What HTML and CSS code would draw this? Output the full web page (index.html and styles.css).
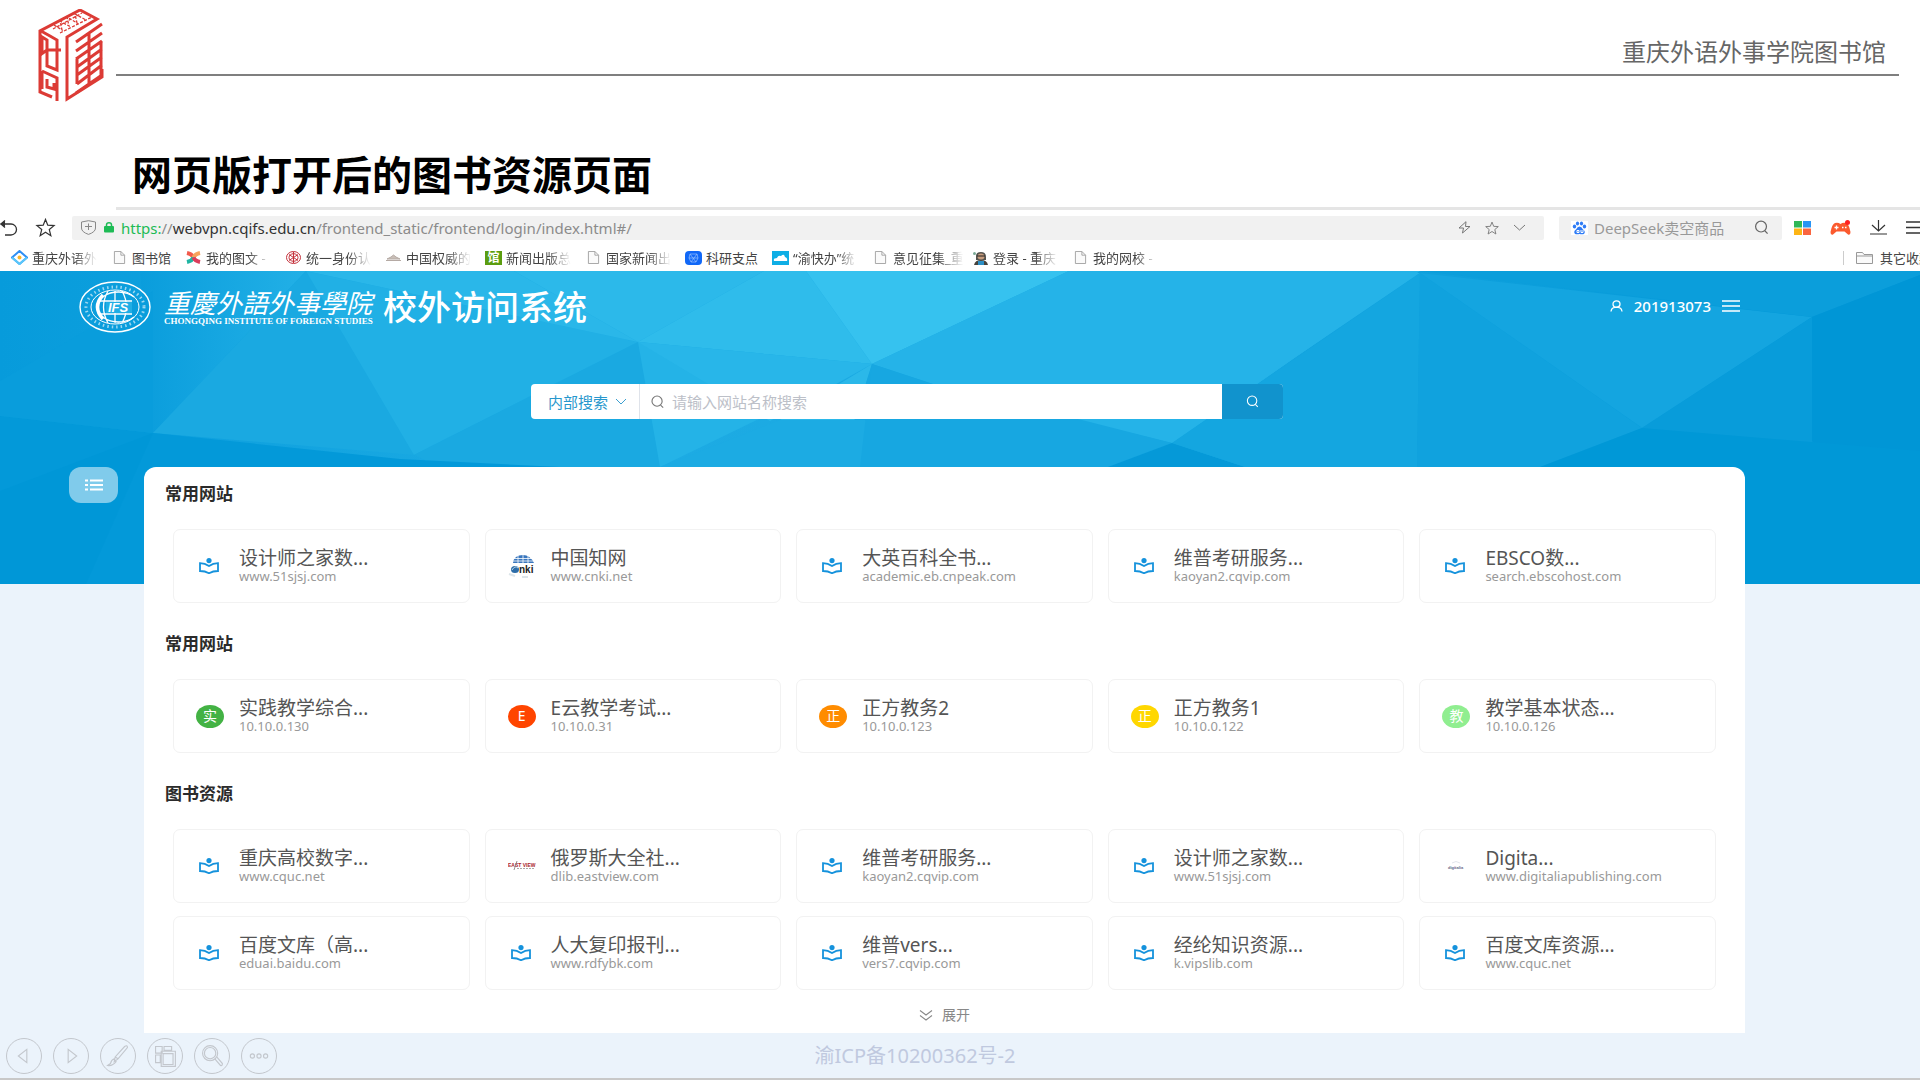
FILE: index.html
```html
<!DOCTYPE html>
<html lang="zh-CN">
<head>
<meta charset="utf-8">
<title>网页版打开后的图书资源页面</title>
<link rel="stylesheet" href="styles.css">
</head>
<body>
<svg class="defs" aria-hidden="true">
  <symbol id="book" viewBox="0 0 20 16"><circle cx="10" cy="2.6" r="2.6" fill="#1592dc"/><path d="M1 5.2Q6 5.2 10 8Q14 5.2 19 5.2V13Q14 13 10 15.2Q6 13 1 13Z" fill="none" stroke="#1592dc" stroke-width="1.8"/></symbol>
  <symbol id="page" viewBox="0 0 12 14"><path d="M.5.5H7.5L11.5 4.5V13.5H.5ZM7.5.5V4.5H11.5" fill="#fafafa" stroke="#a0a0a0"/></symbol>
  <symbol id="search" viewBox="0 0 16 16"><circle cx="7.5" cy="7" r="5.8" fill="none" stroke="currentColor" stroke-width="1.3"/><path d="M11.5 11.5L14.5 14.5" stroke="currentColor" stroke-width="1.3"/></symbol>
  <symbol id="star" viewBox="0 0 20 20"><path d="M10 1.5L12.4 7.6L19 8L14 12.2L15.6 18.6L10 15L4.4 18.6L6 12.2L1 8L7.6 7.6Z" fill="none" stroke="currentColor" stroke-width="1.3"/></symbol>
</svg>

<header class="slide-head">
  <svg class="seal" viewBox="0 0 66 94" aria-hidden="true">
    <g fill="none" stroke="#dc3b35" stroke-width="3">
      <path d="M14 88L2 83V22L42 1L59 10L29 28V90L64 68V60"/>
      <path d="M3 22L12 27L19 31V61L9 57V31L4 28V44M2 46L9 41H23M4 62L19 69V92M4 62V80M9 70V78L16 80V74"/>
      <path d="M16 16L24 21L22 12L31 17L29 8L39 14L37 5L48 11M15 20L44 4M22 24L54 8" stroke-width="1.3" stroke-dasharray="3 1.500"/>
      <path d="M38 33L64 15M38 42L64 24M38 50L64 32M39 58L64 40M39 66L64 48M39 75L64 56M38 84L64 66M39 50V75M51 24V76M63 32V66"/>
    </g>
  </svg>
  <div class="slide-owner">重庆外语外事学院图书馆</div>
</header>
<h1 class="slide-title">网页版打开后的图书资源页面</h1>

<div class="browser">
  <div class="tabline"></div>
  <div class="toolbar">
    <button class="icon-btn back" aria-label="后退"><svg width="18" height="18" viewBox="0 0 18 18"><path d="M5 1.500L1 5L5 8.500M1 5H11A5.500 5.500 0 0 1 11 16H5" fill="none" stroke="#333" stroke-width="1.300"/><path d="M5 2V8L0 5Z" fill="#333"/></svg></button>
    <button class="icon-btn fav" aria-label="收藏"><svg width="21" height="19"><use href="#star"/></svg></button>
    <div class="address">
      <svg width="17" height="15" viewBox="0 0 17 15"><path d="M1.500 2L8.500.700L15.500 2V8Q15.500 12 8.500 14.400Q1.500 12 1.500 8ZM5 6.500H12M8.500 3.500V10" fill="none" stroke="#888"/></svg>
      <svg width="12" height="11" viewBox="0 0 12 11"><rect x="1" y="4" width="10" height="6.500" rx="1" fill="#1dbb55"/><path d="M3.500 5V3A2.500 2.200 0 0 1 8.500 3V5" fill="none" stroke="#1dbb55" stroke-width="1.500"/></svg>
      <span class="url"><span class="scheme">https:</span>//<b>webvpn.cqifs.edu.cn</b>/frontend_static/frontend/login/index.html#/</span>
      <svg width="13" height="13" viewBox="0 0 13 13"><path d="M8 .700L1 7H5.500L4.500 12L12 5.500H7.500Z" fill="none" stroke="#777"/></svg>
      <svg class="small-star" width="16" height="14"><use href="#star"/></svg>
      <svg width="13" height="7" viewBox="0 0 13 7"><path d="M1 1L6.500 6L12 1" fill="none" stroke="#777"/></svg>
    </div>
    <label class="quick">
      <svg width="17" height="14" viewBox="0 0 17 14"><rect width="17" height="14" fill="#fff"/><g fill="#2f7cf6"><ellipse cx="3.500" cy="5.500" rx="1.700" ry="2"/><ellipse cx="6.500" cy="2.500" rx="1.600" ry="2"/><ellipse cx="10.500" cy="2.500" rx="1.600" ry="2"/><ellipse cx="13.500" cy="5.500" rx="1.700" ry="2"/><path d="M8.500 5.500Q10.500 5.500 12 8.500Q15 10.500 13 13Q11 13.500 8.500 13Q6 13.500 4 13Q2 10.500 5 8.500Q6.500 5.500 8.500 5.500Z"/></g><path d="M6 9.500V11.500H8V9.500ZM10 9V11.500H12V9" fill="none" stroke="#fff"/></svg>
      <input type="text" placeholder="DeepSeek卖空商品" aria-label="搜索">
      <svg width="17" height="15"><use href="#search"/></svg>
    </label>
    <button class="icon-btn" aria-label="应用"><svg width="17" height="14" viewBox="0 0 17 14"><path d="M0 0H8V6.500H0Z" fill="#2fb757"/><path d="M9 0H17V6.500H9Z" fill="#2894f4"/><path d="M0 7.500H8V14H0Z" fill="#fdb515"/><path d="M9 7.500H17V14H9Z" fill="#fa6540"/></svg></button>
    <button class="icon-btn" aria-label="游戏"><svg width="21" height="16" viewBox="0 0 21 16"><path d="M5 3Q8 2 10.500 4Q13 2 16 3Q19 4 20.500 12Q20.500 15.500 18 14.500L14.500 11.500H6.500L3 14.500Q.500 15.500.500 12Q2 4 5 3Z" fill="#fb5a2e"/><path d="M4.500 7.500H8.500M6.500 5.500V9.500M12 7.500H13.500M15 7.500H16.500" stroke="#fff" stroke-width="1.300"/><circle cx="17.500" cy="2.500" r="2.500" fill="#f22"/></svg></button>
    <button class="icon-btn" aria-label="下载"><svg width="17" height="15" viewBox="0 0 17 15"><path d="M8.500 0V11M2 5L8.500 11L15 5M0 14H17" fill="none" stroke="#333" stroke-width="1.200"/></svg></button>
    <button class="icon-btn" aria-label="菜单"><svg width="18" height="13" viewBox="0 0 18 13"><path d="M0 1H18M0 6.500H18M0 12H18" stroke="#333" stroke-width="1.300"/></svg></button>
  </div>
  <nav class="bookmarks">
    <a href="#"><svg width="17" height="15" viewBox="0 0 17 15"><path d="M8.500 1L16 7.500L8.500 14L1 7.500Z" fill="none" stroke="#2e8ff5" stroke-width="2"/><path d="M1 7.500L8.500 14L16 7.500" fill="none" stroke="#5ac8fa" stroke-width="2"/><circle cx="8.500" cy="7.500" r="2" fill="#fbb92c"/></svg><span class="fade">重庆外语外</span></a>
    <a href="#"><svg width="17" height="13"><use href="#page"/></svg><span>图书馆</span></a>
    <a href="#"><svg width="17" height="13" viewBox="0 0 17 13"><path d="M2 2Q7 3 8.500 6.500" stroke="#f25a4c" stroke-width="4"/><path d="M15 2Q10 3 8.500 6.500" stroke="#f7a35c" stroke-width="4"/><path d="M2 11Q7 10 8.500 6.500" stroke="#1fb5a3" stroke-width="4"/><path d="M15 11Q10 10 8.500 6.500" stroke="#dc3c5c" stroke-width="4"/></svg><span class="fade">我的图文 -</span></a>
    <a href="#"><svg width="17" height="13" viewBox="0 0 17 13"><g fill="none" stroke="#c4313b"><ellipse cx="8.500" cy="6.500" rx="7" ry="6"/><ellipse cx="8.500" cy="6.500" rx="4.500" ry="3.800"/><path d="M4 3.500L13 9.500M13 3.500L4 9.500M8.500 1V12"/></g></svg><span class="fade">统一身份认</span></a>
    <a href="#"><svg width="17" height="13" viewBox="0 0 17 13"><path d="M1 9.500H16M2 8L6 6L8.500 4L11 6L15 8Z" fill="#c9bfb8" stroke="#b5aaa4"/></svg><span class="fade">中国权威的</span></a>
    <a href="#"><i class="guan">馆</i><span class="fade">新闻出版总</span></a>
    <a href="#"><svg width="17" height="13"><use href="#page"/></svg><span class="fade">国家新闻出</span></a>
    <a href="#"><svg width="17" height="14" viewBox="0 0 17 14"><rect width="17" height="14" rx="4" fill="#1168f7"/><path d="M5 3H12L13 7L11 11H6L4 7ZM5 3L11 11M12 3L6 11M4 7H13" fill="none" stroke="#9cc4ff" stroke-width=".700"/></svg><span>科研支点</span></a>
    <a href="#"><svg width="17" height="14" viewBox="0 0 17 14"><rect width="17" height="14" fill="#0faee5"/><path d="M2 10Q1 7 5 7Q6 4 9 5Q12 2 13 6Q16 7 15 10Z" fill="#fff"/></svg><span class="fade">“渝快办”统</span></a>
    <a href="#"><svg width="17" height="13"><use href="#page"/></svg><span class="fade wide">意见征集_重</span></a>
    <a href="#"><svg width="17" height="14" viewBox="0 0 17 14"><path d="M4 5Q4 1 9 1Q14 1 14 6V9H4Z" fill="#54534e"/><ellipse cx="9" cy="5.500" rx="3.500" ry="3" fill="#c69c7d"/><path d="M2 14Q3 9 9 9Q15 9 16 14Z" fill="#47423c"/><path d="M6 10H12V14H6Z" fill="#2d8fc5"/><path d="M5 5H13" stroke="#222"/><circle cx="2.500" cy="2.500" r="1.500" fill="#7aa996"/></svg><span class="fade">登录 - 重庆</span></a>
    <a href="#"><svg width="17" height="13"><use href="#page"/></svg><span class="fade">我的网校 -</span></a>
    <a href="#" class="others"><svg width="17" height="12" viewBox="0 0 17 12"><path d="M.500.500H6.500L8 2.500H16.500V11.500H.500ZM.500 4H16.500" fill="#fafafa" stroke="#999"/></svg><span>其它收藏</span></a>
  </nav>
</div>

<main class="site">
  <svg class="hero" viewBox="0 0 1920 313" preserveAspectRatio="none" aria-hidden="true">
    <defs><linearGradient id="sky"><stop offset="0" stop-color="#079bdb"/><stop offset=".300" stop-color="#1eace4"/><stop offset=".600" stop-color="#18a6e0"/><stop offset="1" stop-color="#0096d6"/></linearGradient>
    <linearGradient id="edge"><stop offset="0" stop-color="#0a9ddc"/><stop offset="1" stop-color="#22b0e6"/></linearGradient></defs>
    <rect width="1920" height="313" fill="url(#sky)"/>
    <path d="M140 0H306L153 162Z" fill="url(#edge)"/>
    <path d="M306 0L153 162L414 184L370 90Z" fill="#1aa9e1"/>
    <path d="M306 0L638 71L414 184Z" fill="#21b0e5"/>
    <path d="M306 0H514L638 71Z" fill="#2ab7e9"/>
    <path d="M514 0H764L638 71Z" fill="#2cb9ea"/>
    <path d="M764 0H806L872 93L638 71Z" fill="#2fbceb"/>
    <path d="M806 0H1069L872 93Z" fill="#36c2ef"/>
    <path d="M1069 0H1420L1172 172L872 93Z" fill="#24b3e8"/>
    <path d="M638 71L872 93L660 196H414Z" fill="#24b3e7"/>
    <path d="M638 71L414 184L440 196H660Z" fill="#1aa9e1"/>
    <path d="M638 71L872 93L770 150Z" fill="#28b6e9"/>
    <path d="M872 93L780 149L840 196L872 93Z" fill="#2bb8e9"/>
    <path d="M872 93L1172 172L1108 196H840Z" fill="#17a7e1"/>
    <path d="M780 149L660 196H940L865 149Z" fill="#1cabe3"/>
    <path d="M872 93L945 117L1172 172L1290 90L1420 2L1069 0Z" fill="#25b3e8"/>
    <path d="M872 93L945 117L1082 149L1172 172L1108 196H860Z" fill="#17a7e1"/>
    <path d="M1172 172L1108 196H1245Z" fill="#0599d8"/>
    <path d="M1420 2L1417 196H1245L1172 172Z" fill="#14a6e0"/>
    <path d="M1420 2L1812 46L1642 157Z" fill="#14a5e0"/>
    <path d="M1420 2L1642 157L1540 196H1417Z" fill="#10a2de"/>
    <path d="M1420 0H1920V4L1812 46Z" fill="#0b9edb"/>
    <path d="M1812 46L1642 157L1660 200L1920 313V170Z" fill="#089cda"/>
    <path d="M1812 46L1920 4V313L1812 170Z" fill="#0096d6"/>
    <path d="M1642 157L1540 196L1745 313H1920V180Z" fill="#0098d7"/>
    <path d="M0 145L153 162L400 188L560 196L144 313H0Z" fill="#0399d9"/>
    <path d="M0 313V220L153 162L86 313Z" fill="#0097d7"/>
    <path d="M0 110L153 20V162L0 145Z" fill="#099ddc"/>
  </svg>

  <header class="site-head">
    <svg class="crest" viewBox="0 0 72 52" aria-hidden="true">
      <g fill="none" stroke="#fff">
        <ellipse cx="36" cy="26" rx="35" ry="25" stroke-width="1.400"/>
        <ellipse cx="36" cy="26" rx="29" ry="20" stroke-width="3" stroke-dasharray="1.500 3" opacity=".600"/>
        <ellipse cx="36" cy="26" rx="24" ry="17" stroke-width="1"/>
        <path d="M55 16A21 15 0 1 0 55 36M36 10V42M19 20H53M19 33H53M29 10Q20 26 29 42M43 10Q52 26 43 42" stroke-width="1.300"/>
        <path d="M24 14Q13 26 24 38" stroke-width="3.500"/>
      </g>
      <rect x="27" y="21" width="26" height="11" fill="#20aee5"/>
      <text x="29" y="31" class="crest-text">IFS</text>
    </svg>
    <div class="school"><span class="school-cn">重慶外語外事學院</span><span class="school-en">CHONGQING INSTITUTE OF FOREIGN STUDIES</span></div>
    <h2 class="system">校外访问系统</h2>
    <div class="user"><svg width="13" height="12" viewBox="0 0 13 12"><ellipse cx="6.500" cy="4" rx="3.500" ry="3.200" fill="none" stroke="#fff" stroke-width="1.300"/><path d="M1 11.500Q1.500 7.500 5 7.300M12 11.500Q11.500 7.500 8 7.300M5 7.300H8" fill="none" stroke="#fff" stroke-width="1.300"/></svg><span>201913073</span>
    <button class="icon-btn" aria-label="导航"><svg width="18" height="12" viewBox="0 0 18 12"><path d="M0 1H18M0 6H18M0 11H18" stroke="#fff" stroke-width="1.600"/></svg></button></div>
  </header>

  <form class="search">
    <div class="scope"><select aria-label="搜索范围"><option>内部搜索</option></select><svg width="12" height="7" viewBox="0 0 12 7"><path d="M1 1L6 6L11 1" fill="none" stroke="#3a9fd0"/></svg></div>
    <label class="term"><svg width="15" height="14"><use href="#search"/></svg><input type="text" placeholder="请输入网站名称搜索" aria-label="网站名称"></label>
    <button type="button" class="go" aria-label="搜索"><svg width="15" height="13"><use href="#search"/></svg></button>
  </form>

  <div class="body">
    <aside class="side"><button class="list-btn" aria-label="分类"><svg width="18" height="12" viewBox="0 0 18 12"><path d="M0 1.500H3M5 1.500H18M0 6H3M5 6H18M0 10.500H3M5 10.500H18" stroke="#fff" stroke-width="1.800"/></svg></button></aside>
    <div class="panel">
      <section>
        <h3>常用网站</h3>
        <div class="cards">
          <a class="card" href="#"><svg class="ico"><use href="#book"/></svg><span class="txt"><strong>设计师之家数...</strong><small>www.51sjsj.com</small></span></a>
          <a class="card" href="#"><svg class="pic" viewBox="0 0 28 24"><path d="M5 9Q6 1 15 1Q22 1 26 9Z" fill="#3976bd"/><path d="M6 4.500H24M4 7H26M10 1V9M15 1V9M20 1V9" stroke="#fff" stroke-width=".800"/><ellipse cx="7" cy="15.500" rx="4" ry="3.500" fill="#2d6da8"/><path d="M4 16Q7 11 10 14" stroke="#b9d5e9" fill="none"/><text x="11" y="19" class="cnki">nki</text><path d="M1 20L7 22M14 23H20" stroke="#dde5ea" stroke-width="2"/></svg><span class="txt"><strong>中国知网</strong><small>www.cnki.net</small></span></a>
          <a class="card" href="#"><svg class="ico"><use href="#book"/></svg><span class="txt"><strong>大英百科全书...</strong><small>academic.eb.cnpeak.com</small></span></a>
          <a class="card" href="#"><svg class="ico"><use href="#book"/></svg><span class="txt"><strong>维普考研服务...</strong><small>kaoyan2.cqvip.com</small></span></a>
          <a class="card" href="#"><svg class="ico"><use href="#book"/></svg><span class="txt"><strong>EBSCO数...</strong><small>search.ebscohost.com</small></span></a>
        </div>
      </section>
      <section>
        <h3>常用网站</h3>
        <div class="cards">
          <a class="card" href="#"><i class="dot green">实</i><span class="txt"><strong>实践教学综合...</strong><small>10.10.0.130</small></span></a>
          <a class="card" href="#"><i class="dot red">E</i><span class="txt"><strong>E云教学考试...</strong><small>10.10.0.31</small></span></a>
          <a class="card" href="#"><i class="dot orange">正</i><span class="txt"><strong>正方教务2</strong><small>10.10.0.123</small></span></a>
          <a class="card" href="#"><i class="dot yellow">正</i><span class="txt"><strong>正方教务1</strong><small>10.10.0.122</small></span></a>
          <a class="card" href="#"><i class="dot lime">教</i><span class="txt"><strong>教学基本状态...</strong><small>10.10.0.126</small></span></a>
        </div>
      </section>
      <section>
        <h3>图书资源</h3>
        <div class="cards">
          <a class="card" href="#"><svg class="ico"><use href="#book"/></svg><span class="txt"><strong>重庆高校数字...</strong><small>www.cquc.net</small></span></a>
          <a class="card" href="#"><svg class="pic" viewBox="0 0 28 24"><text x="0" y="13" class="east">EAST VIEW</text><path d="M9 7L6 16" stroke="#777" stroke-width=".800"/><path d="M9 14.500H27" stroke="#aaa" stroke-dasharray="2 1"/></svg><span class="txt"><strong>俄罗斯大全社...</strong><small>dlib.eastview.com</small></span></a>
          <a class="card" href="#"><svg class="ico"><use href="#book"/></svg><span class="txt"><strong>维普考研服务...</strong><small>kaoyan2.cqvip.com</small></span></a>
          <a class="card" href="#"><svg class="ico"><use href="#book"/></svg><span class="txt"><strong>设计师之家数...</strong><small>www.51sjsj.com</small></span></a>
          <a class="card" href="#"><svg class="pic" viewBox="0 0 28 24"><text x="6" y="15" class="digi">digitalia</text><path d="M10 9Q14 6 18 9" fill="none" stroke="#e3e6ec"/></svg><span class="txt"><strong>Digita...</strong><small>www.digitaliapublishing.com</small></span></a>
          <a class="card" href="#"><svg class="ico"><use href="#book"/></svg><span class="txt"><strong>百度文库（高...</strong><small>eduai.baidu.com</small></span></a>
          <a class="card" href="#"><svg class="ico"><use href="#book"/></svg><span class="txt"><strong>人大复印报刊...</strong><small>www.rdfybk.com</small></span></a>
          <a class="card" href="#"><svg class="ico"><use href="#book"/></svg><span class="txt"><strong>维普vers...</strong><small>vers7.cqvip.com</small></span></a>
          <a class="card" href="#"><svg class="ico"><use href="#book"/></svg><span class="txt"><strong>经纶知识资源...</strong><small>k.vipslib.com</small></span></a>
          <a class="card" href="#"><svg class="ico"><use href="#book"/></svg><span class="txt"><strong>百度文库资源...</strong><small>www.cquc.net</small></span></a>
        </div>
      </section>
      <button class="expand"><svg width="14" height="11" viewBox="0 0 14 11"><path d="M1 .500L7 5L13 .500M1 5.500L7 10L13 5.500" fill="none" stroke="#888" stroke-width="1.100"/></svg>展开</button>
    </div>
  </div>

  <footer class="foot">
    <div class="controls">
      <button aria-label="上一页"><svg viewBox="0 0 36 36"><path d="M21 11V25L12 18Z"/></svg></button>
      <button aria-label="下一页"><svg viewBox="0 0 36 36"><path d="M15 11V25L24 18Z"/></svg></button>
      <button aria-label="画笔"><svg viewBox="0 0 36 36"><path d="M25 8Q28 6 28 9L18 21L14 24L15 19ZM15 19L18 21M14 21Q11 22 10 26L7 28Q12 29 16 24Z"/></svg></button>
      <button aria-label="幻灯片"><svg viewBox="0 0 36 36"><path d="M8 8H15V15H8ZM17 8H25V12H17ZM8 17H13V25H8ZM14 13H29V29H14ZM16 15.500H26.500V27H16Z"/></svg></button>
      <button aria-label="放大"><svg viewBox="0 0 36 36"><circle cx="16" cy="15" r="8"/><circle cx="16" cy="15" r="6"/><path d="M21 21L27 28Q29 29 29 26L23 19"/></svg></button>
      <button aria-label="更多"><svg viewBox="0 0 36 36"><circle cx="11" cy="18" r="2.200"/><circle cx="18" cy="18" r="2.200"/><circle cx="25" cy="18" r="2.200"/></svg></button>
    </div>
    <span class="icp">渝ICP备10200362号-2</span>
  </footer>
</main>
</body>
</html>
```
FILE: styles.css
```css
* { box-sizing: border-box; }
body {
  margin: 0;
  min-height: 100vh;
  display: flex;
  flex-direction: column;
  overflow-x: hidden;
  background: #fff;
  font-family: "Noto Sans", "Noto Sans CJK SC", sans-serif;
  font-size: 14px;
  color: #333;
}
a { color: inherit; text-decoration: none; }
i { font-style: normal; }
svg { flex: none; display: block; }
button, input, select { font: inherit; color: inherit; border: 0; background: none; padding: 0; outline: 0; }
.defs { position: absolute; width: 0; height: 0; }
.icon-btn { display: flex; align-items: center; flex: none; }

/* slide header */
.slide-head { display: flex; align-items: flex-start; height: 104px; padding: 9px 21px 0 38px; }
.seal { width: 66px; height: 94px; margin-right: 12px; }
.slide-owner {
  flex: 1;
  height: 67px;
  padding: 24px 13px 0 0;
  border-bottom: 2px solid #7f7f7f;
  text-align: right;
  font-size: 24px;
  line-height: 36px;
  color: #666;
  font-family: "Noto Sans CJK SC", sans-serif;
}
.slide-title {
  margin: 44px 0 0 132px;
  height: 59px;
  font-family: "Noto Sans CJK SC", sans-serif;
  font-size: 40px;
  line-height: 50px;
  font-weight: 700;
  color: #000;
}

/* browser chrome */
.browser { height: 64px; }
.tabline { height: 3px; margin-left: 116px; background: #e5e5e5; }
.toolbar { display: flex; align-items: center; height: 36px; gap: 19px; padding-bottom: 1px; }
.back { margin-right: -2px; }
.fav { margin-right: -3px; color: #333; }
.address { flex: 1; display: flex; align-items: center; gap: 6px; height: 24px; padding: 0 18px 0 8px; background: #f1f1f1; border-radius: 2px; margin-right: -4px; }
.address svg:nth-of-type(n+3) { margin-left: 7px; }
.small-star { color: #777; }
.url { flex: 1; color: #8b8b8b; font-size: 15px; line-height: 22px; }
.url b { color: #333; font-weight: 400; }
.scheme { color: #1dbb55; }
.quick { display: flex; align-items: center; gap: 6px; width: 223px; height: 24px; padding: 0 12px; background: #f1f1f1; border-radius: 2px; margin-right: -7px; color: #666; }
.quick input { flex: 1; min-width: 0; font-size: 15px; }
.quick input::placeholder { color: #999; opacity: 1; }
.toolbar > .icon-btn:last-child { margin-right: -4px; }
.bookmarks { display: flex; align-items: center; gap: 14px; height: 23px; padding-left: 11px; font-size: 13px; line-height: 18px; color: #444; overflow: hidden; }
.bookmarks a { display: flex; align-items: center; gap: 4px; flex: none; white-space: nowrap; }
.fade { width: 65px; overflow: hidden; -webkit-mask-image: linear-gradient(90deg, #000 65%, transparent); mask-image: linear-gradient(90deg, #000 65%, transparent); }
.wide { width: 71px; margin-right: -6px; }
.guan { width: 17px; height: 14px; background: #5b9d10; color: #fff; font-size: 12px; line-height: 13px; text-align: center; font-weight: 700; }
.bookmarks .others { margin-left: auto; margin-right: -12px; padding-left: 12px; gap: 7px; border-left: 1px solid #ccc; height: 14px; }

/* site */
.site { position: relative; flex: 1; display: flex; flex-direction: column; background: #ebf3fb; border-bottom: 2px solid #c8c8c8; }
.hero { position: absolute; top: 0; left: 0; width: 100%; height: 313px; }
.site-head, .search, .body, .foot { position: relative; }
.site-head { display: flex; align-items: center; height: 72px; padding: 0 180px 0 79px; color: #fff; }
.crest { width: 72px; height: 52px; }
.crest-text { font: italic 700 13px "Liberation Sans", sans-serif; fill: #fff; }
.school { display: flex; flex-direction: column; width: 208px; margin: 0 11px 0 13px; white-space: nowrap; }
.school-cn { font: italic 400 26px/28px "Noto Sans CJK TC", sans-serif; }
.school-en { font: 700 9px/10px "Liberation Serif", serif; }
.system { margin: 0; padding-bottom: 2px; font: 500 34px/48px "Noto Sans CJK SC", sans-serif; }
.user { display: flex; align-items: center; margin-left: auto; gap: 11px; font-size: 15px; line-height: 20px; font-weight: 500; padding-bottom: 2px; }
.search { display: flex; align-self: center; width: 752px; height: 35px; margin: 41px 106px 0 0; background: #fff; border-radius: 4px; overflow: hidden; }
.scope { display: flex; align-items: center; width: 109px; padding-left: 17px; border-right: 1px solid #dfe3ea; color: #2797cd; }
.scope select { appearance: none; width: 67px; font-size: 15px; font-family: "Noto Sans CJK SC", sans-serif; }
.term { flex: 1; display: flex; align-items: center; gap: 7px; padding-left: 10px; color: #777; }
.term input { flex: 1; font-size: 15px; }
.term input::placeholder { color: #bcc0c8; opacity: 1; }
.go { display: flex; align-items: center; justify-content: center; width: 61px; background: #1193cd; color: #fff; }
.body { display: flex; align-items: flex-start; margin-top: 48px; padding-right: 175px; }
.side { width: 144px; flex: none; padding-left: 69px; }
.list-btn { display: flex; align-items: center; justify-content: center; width: 49px; height: 36px; border-radius: 12px; background: rgba(255, 255, 255, .5); }
.panel { flex: 1; min-width: 0; padding: 14px 29px 6px; background: #fff; border-radius: 12px 12px 0 0; }
.panel section + section { margin-top: 28px; }
.panel h3 { margin: 0 0 24px -8px; font: 700 17px/24px "Noto Sans CJK SC", sans-serif; color: #2b2b2b; }
.cards { display: grid; grid-template-columns: repeat(5, minmax(0, 1fr)); gap: 13px 15px; }
.card { display: flex; align-items: center; height: 74px; border: 1px solid #f2f2f2; border-radius: 7px; padding-left: 22px; background: #fff; }
.ico { width: 20px; height: 16px; margin: 0 20px 0 3px; }
.pic { width: 28px; height: 24px; margin-right: 15px; }
.dot { display: flex; align-items: center; justify-content: center; width: 28px; height: 23px; margin-right: 15px; border-radius: 50%; color: #fff; font-size: 14px; line-height: 20px; }
.green { background: #43b244; }
.red { background: #ff4500; }
.orange { background: #ff8c00; }
.yellow { background: #ffd700; }
.lime { background: #90ee90; }
.txt { display: flex; flex-direction: column; min-width: 0; }
.card strong { font-weight: 400; font-size: 19px; line-height: 20px; color: #555; white-space: nowrap; }
.card small { font-size: 13px; line-height: 16px; color: #999; white-space: nowrap; }
.cnki { font: 700 10px "Liberation Sans", sans-serif; fill: #222; }
.east { font: 700 5px "Liberation Sans", sans-serif; fill: #a8242c; }
.digi { font: 700 4px "Liberation Sans", sans-serif; fill: #5d6685; }
.expand { display: flex; align-items: center; gap: 9px; margin: 13px auto 0; font-size: 14px; line-height: 24px; color: #888; }
.foot { flex: 1; display: grid; grid-template-columns: 1fr auto 1fr; align-items: center; min-height: 45px; padding: 0 96px 0 6px; }
.controls { display: flex; gap: 11px; }
.controls button { width: 36px; height: 36px; border: 1px solid #c3c7cd; border-radius: 50%; }
.controls svg { width: 34px; height: 34px; fill: none; stroke: #c3c7cd; stroke-width: 1.2; }
.icp { font-size: 20px; line-height: 28px; color: #c0c9df; }
```
